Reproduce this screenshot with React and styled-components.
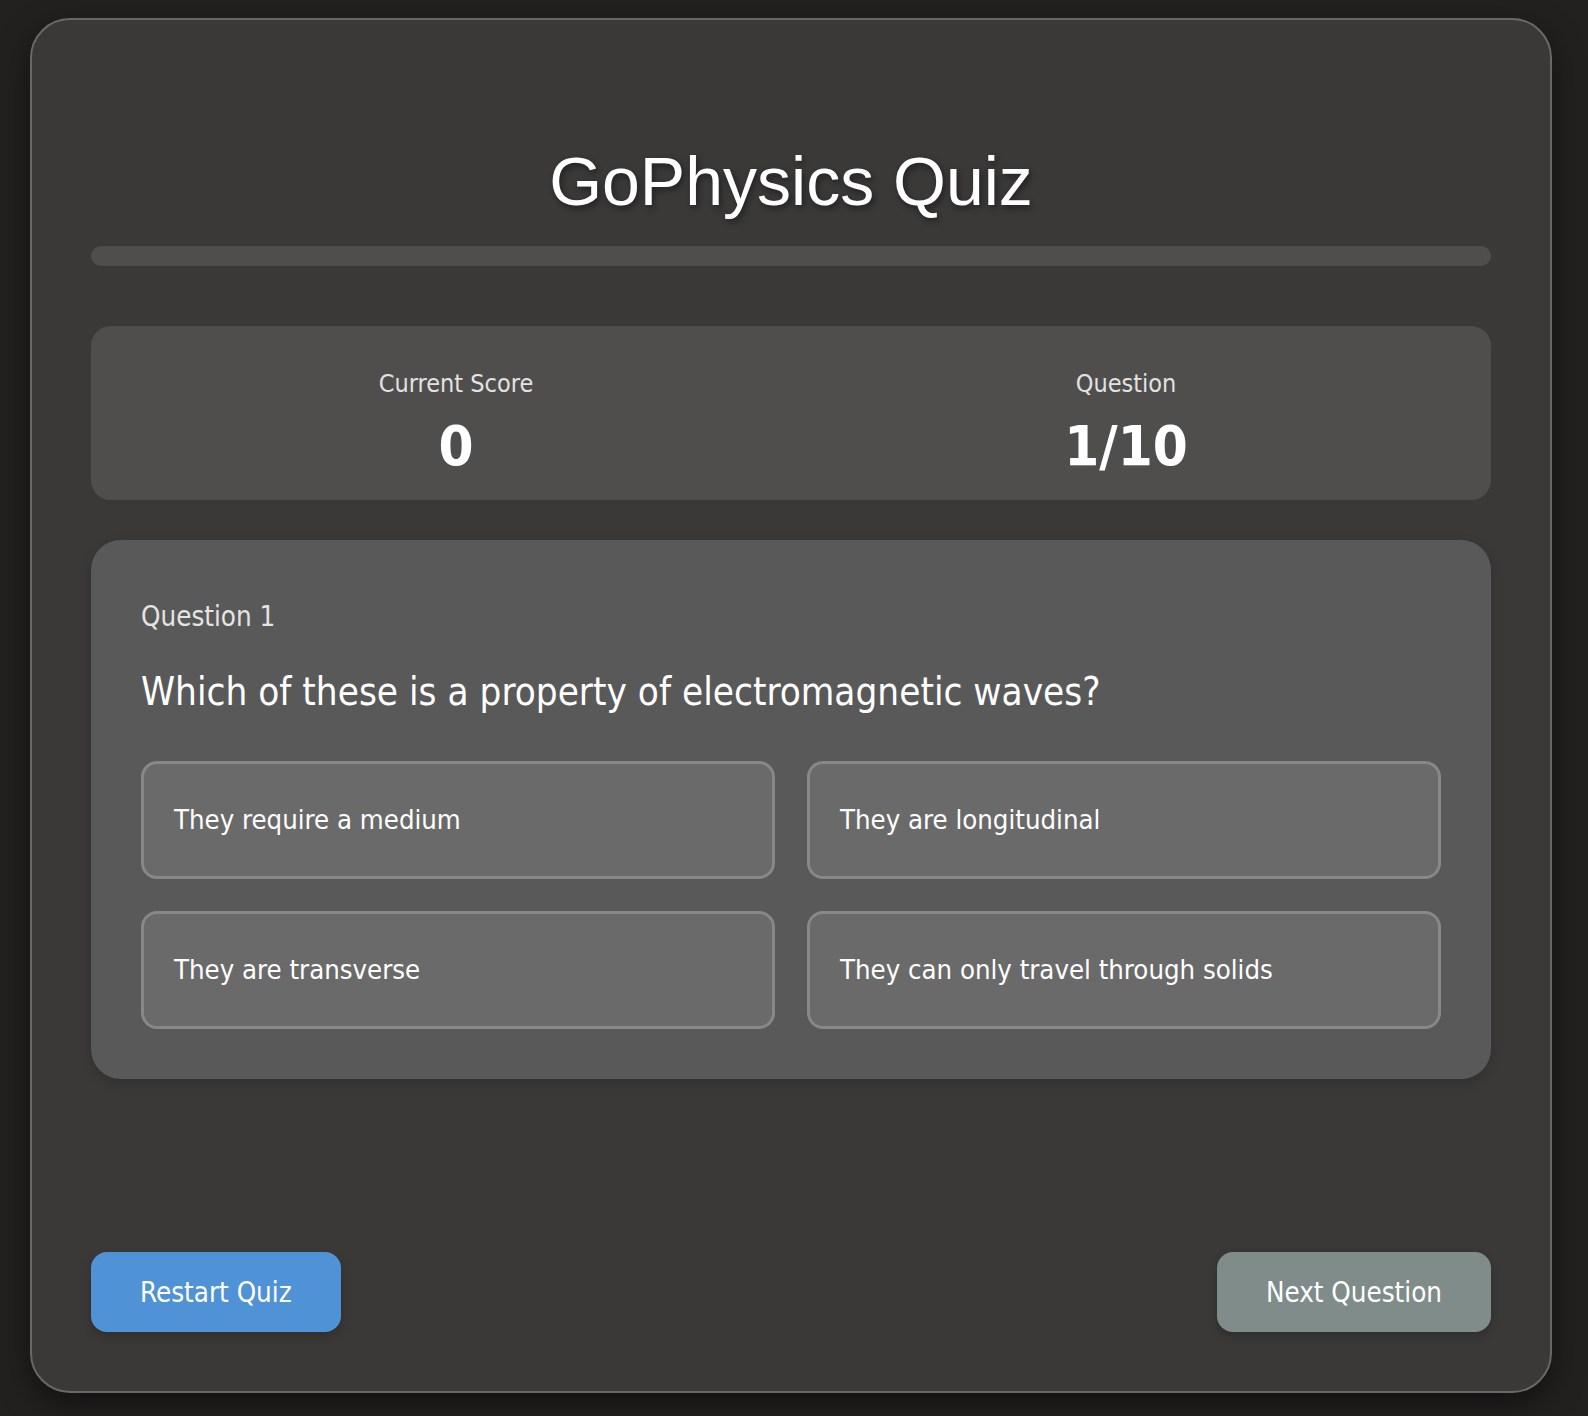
import React from "react";
import styled, { createGlobalStyle } from "styled-components";

const GlobalStyle = createGlobalStyle`
  html, body {
    margin: 0;
    padding: 0;
    background: #232120;
  }
  body {
    font-family: "DejaVu Sans Condensed", "DejaVu Sans", sans-serif;
    font-stretch: condensed;
    color: #ffffff;
  }
  * { box-sizing: border-box; }
`;

const Page = styled.div`
  width: 1588px;
  height: 1416px;
  padding: 18px 36px 23px 30px;
`;

const Card = styled.main`
  width: 1522px;
  height: 1375px;
  background: #3a3938;
  border: 2px solid #6a6866;
  border-radius: 40px;
  padding: 59px;
  display: flex;
  flex-direction: column;
  box-shadow: 0 10px 30px rgba(0, 0, 0, 0.5);
`;

const Title = styled.h1`
  margin: 62px 0 0;
  font-family: "Liberation Sans", Arial, sans-serif;
  font-weight: 400;
  font-size: 68px;
  line-height: 1.2;
  text-align: center;
  color: #ffffff;
  text-shadow: 2px 3px 6px rgba(0, 0, 0, 0.45);
`;

const Progress = styled.div`
  margin-top: 23px;
  height: 20px;
  border-radius: 10px;
  background: #4f4e4d;
  overflow: hidden;
`;

const ProgressFill = styled.div`
  height: 100%;
  background: #4f93d6;
  border-radius: 10px;
`;

const Stats = styled.section`
  margin-top: 60px;
  background: #4f4e4d;
  border-radius: 20px;
  padding: 43px 40px 21px;
  display: grid;
  grid-template-columns: 1fr 1fr;
  column-gap: 20px;
`;

const Stat = styled.div`
  display: flex;
  flex-direction: column;
  align-items: center;
`;

const StatLabel = styled.div`
  font-size: 25px;
  line-height: 1.2;
  color: #e2e2e2;
`;

const StatValue = styled.div`
  margin-top: 13px;
  font-size: 56px;
  font-weight: 700;
  line-height: 1.2;
  color: #ffffff;
`;

const QuestionCard = styled.section`
  margin-top: 40px;
  background: #5a5959;
  border-radius: 30px;
  padding: 60px 50px 50px;
  box-shadow: 0 4px 12px rgba(0, 0, 0, 0.15);
`;

const QuestionLabel = styled.div`
  font-size: 27.5px;
  line-height: 1.2;
  color: #e4e4e4;
`;

const QuestionText = styled.h2`
  margin: 36px 0 46px;
  font-size: 38.3px;
  font-weight: 400;
  line-height: 1.2;
  color: #ffffff;
`;

const Options = styled.div`
  display: grid;
  grid-template-columns: 1fr 1fr;
  gap: 32px;
`;

const Option = styled.button`
  height: 118px;
  display: flex;
  align-items: center;
  padding: 0 30px;
  background: #6b6a6a;
  border: 3px solid #898888;
  border-radius: 16px;
  color: #ffffff;
  font-family: inherit;
  font-stretch: inherit;
  font-size: 27.3px;
  text-align: left;
  cursor: pointer;
`;

const Footer = styled.div`
  margin-top: auto;
  display: flex;
  justify-content: space-between;
  align-items: center;
`;

const ActionButton = styled.button`
  height: 80px;
  padding: 0 ${(p) => p.$pad}px;
  border: none;
  border-radius: 16px;
  background: ${(p) => p.$bg};
  color: #ffffff;
  font-family: inherit;
  font-stretch: inherit;
  font-size: 27.5px;
  cursor: pointer;
  box-shadow: 0 4px 10px rgba(0, 0, 0, 0.2);
`;

const options = [
  "They require a medium",
  "They are longitudinal",
  "They are transverse",
  "They can only travel through solids",
];

export default function App() {
  return (
    <>
      <GlobalStyle />
      <Page>
        <Card>
          <Title>GoPhysics Quiz</Title>
          <Progress>
            <ProgressFill style={{ width: "0%" }} />
          </Progress>
          <Stats>
            <Stat>
              <StatLabel>Current Score</StatLabel>
              <StatValue>0</StatValue>
            </Stat>
            <Stat>
              <StatLabel>Question</StatLabel>
              <StatValue>1/10</StatValue>
            </Stat>
          </Stats>
          <QuestionCard>
            <QuestionLabel>Question 1</QuestionLabel>
            <QuestionText>
              Which of these is a property of electromagnetic waves?
            </QuestionText>
            <Options>
              {options.map((o) => (
                <Option key={o}>{o}</Option>
              ))}
            </Options>
          </QuestionCard>
          <Footer>
            <ActionButton $bg="#4f93d6" $pad={49}>
              Restart Quiz
            </ActionButton>
            <ActionButton $bg="#7f8c8a" $pad={49}>
              Next Question
            </ActionButton>
          </Footer>
        </Card>
      </Page>
    </>
  );
}
